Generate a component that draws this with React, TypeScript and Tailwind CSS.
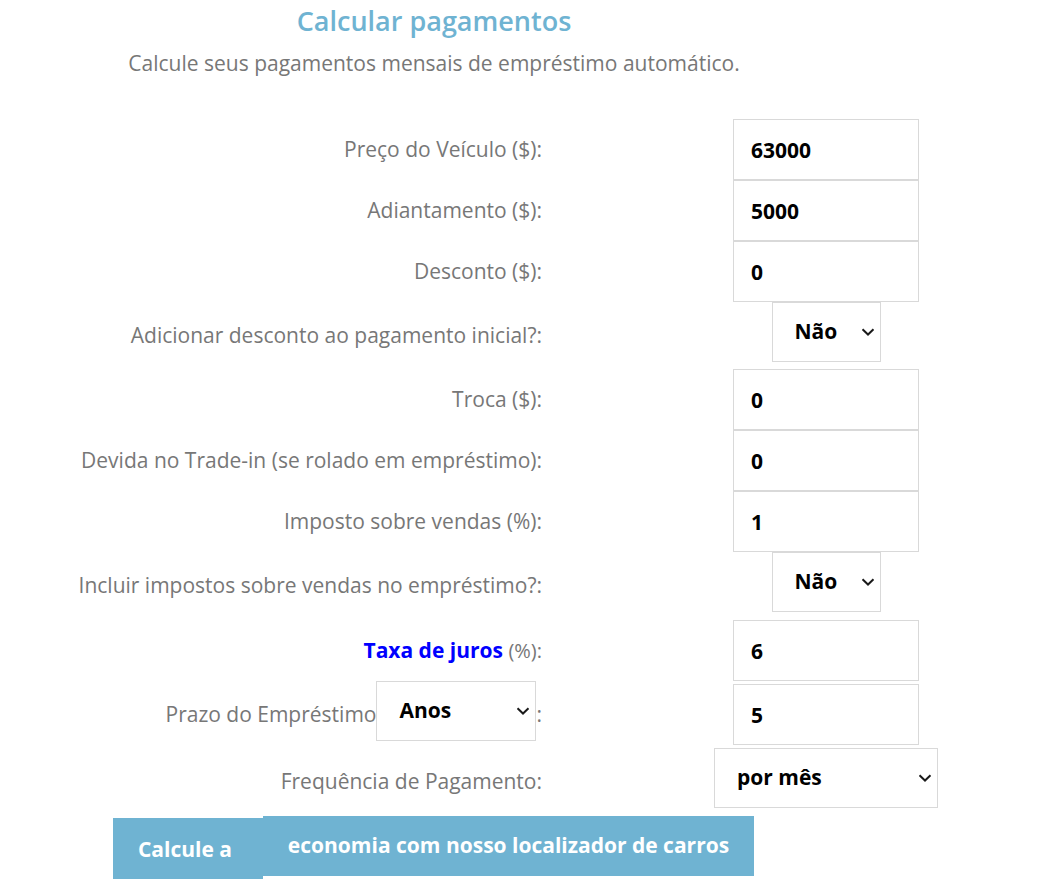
import { useState } from "react";

function Chevron() {
  return (
    <svg width="14" height="9" viewBox="0 0 14 9" className="pointer-events-none absolute right-[6px] top-1/2 -translate-y-1/2">
      <path d="M1.5 1.8 L7 7 L12.5 1.8" fill="none" stroke="#1a1a1a" strokeWidth="2" />
    </svg>
  );
}

function Select({ value, options, w }: { value: string; options: string[]; w: string }) {
  const [v, setV] = useState(value);
  return (
    <div className={`relative ${w} h-[60px]`}>
      <select
        value={v}
        onChange={(e) => setV(e.target.value)}
        className="h-full w-full appearance-none border border-[#d9d9d9] bg-white pl-[22px] text-[21px] font-bold text-black outline-none"
      >
        {options.map((o) => (
          <option key={o} value={o}>
            {o}
          </option>
        ))}
      </select>
      <Chevron />
    </div>
  );
}

function Input({ value }: { value: string }) {
  const [v, setV] = useState(value);
  return (
    <input
      value={v}
      onChange={(e) => setV(e.target.value)}
      className="h-[61px] w-[186px] border border-[#d9d9d9] bg-white pl-[17px] text-[21px] font-bold text-black outline-none"
    />
  );
}

export default function App() {
  const label = "text-right text-[21px] text-[#777777]";
  const row = "flex items-center";
  const left = "w-[542px] shrink-0 flex justify-end items-center";
  const right = "ml-[70px] w-[428px] flex justify-center";

  const textRows: [string, string][] = [
    ["Preço do Veículo ($):", "63000"],
    ["Adiantamento ($):", "5000"],
    ["Desconto ($):", "0"],
  ];
  const textRows2: [string, string][] = [
    ["Troca ($):", "0"],
    ["Devida no Trade-in (se rolado em empréstimo):", "0"],
    ["Imposto sobre vendas (%):", "1"],
  ];

  return (
    <div className="min-h-screen bg-white font-['Open_Sans',sans-serif]">
      <div className="w-[868px] pt-[2px] text-center">
        <h1 className="text-[27px] font-semibold leading-[37px] text-[#6fb3d2]">Calcular pagamentos</h1>
        <p className="mt-[9px] text-[21px] leading-[30px] text-[#777777]">
          Calcule seus pagamentos mensais de empréstimo automático.
        </p>
      </div>

      <div className="mt-[41px]">
        {textRows.map(([l, v]) => (
          <div key={l} className={`${row} h-[61px]`}>
            <div className={left}>
              <span className={label}>{l}</span>
            </div>
            <div className={right}>
              <Input value={v} />
            </div>
          </div>
        ))}

        <div className={`${row} h-[67px]`}>
          <div className={left}>
            <span className={label}>Adicionar desconto ao pagamento inicial?:</span>
          </div>
          <div className={`${right} self-start`}>
            <Select value="Não" options={["Não", "Sim"]} w="w-[109px]" />
          </div>
        </div>

        {textRows2.map(([l, v]) => (
          <div key={l} className={`${row} h-[61px]`}>
            <div className={left}>
              <span className={label}>{l}</span>
            </div>
            <div className={right}>
              <Input value={v} />
            </div>
          </div>
        ))}

        <div className={`${row} h-[68px]`}>
          <div className={left}>
            <span className={label}>Incluir impostos sobre vendas no empréstimo?:</span>
          </div>
          <div className={`${right} self-start`}>
            <Select value="Não" options={["Não", "Sim"]} w="w-[109px]" />
          </div>
        </div>

        <div className={`${row} h-[61px]`}>
          <div className={left}>
            <span className={label}>
              <span className="font-bold text-[#0000ff]">Taxa de juros</span> <span className="text-[20px]">(%):</span>
            </span>
          </div>
          <div className={right}>
            <Input value="6" />
          </div>
        </div>

        <div className={`${row} h-[67px]`}>
          <div className={`${left} self-start`}>
            <span className={`${label} mt-[8px] self-center`}>Prazo do Empréstimo</span>
            <Select value="Anos" options={["Anos", "Meses"]} w="w-[160px]" />
            <span className={`${label} mt-[8px] self-center`}>:</span>
          </div>
          <div className={right}>
            <Input value="5" />
          </div>
        </div>

        <div className={`${row} h-[68px]`}>
          <div className={left}>
            <span className={label}>Frequência de Pagamento:</span>
          </div>
          <div className={`${right} self-start`}>
            <Select value="por mês" options={["por mês", "a cada duas semanas", "por semana"]} w="w-[224px]" />
          </div>
        </div>

        <div className="ml-[113px] flex items-start">
          <div className="mt-[2px] flex h-[61px] w-[150px] items-center justify-center bg-[#6fb3d2] pr-[6px] pt-[2px] text-[21px] font-bold text-white">
            Calcule a
          </div>
          <div className="flex h-[60px] w-[491px] items-center justify-center bg-[#6fb3d2] pb-[1px] text-[21px] font-bold text-white">
            economia com nosso localizador de carros
          </div>
        </div>
      </div>
    </div>
  );
}
